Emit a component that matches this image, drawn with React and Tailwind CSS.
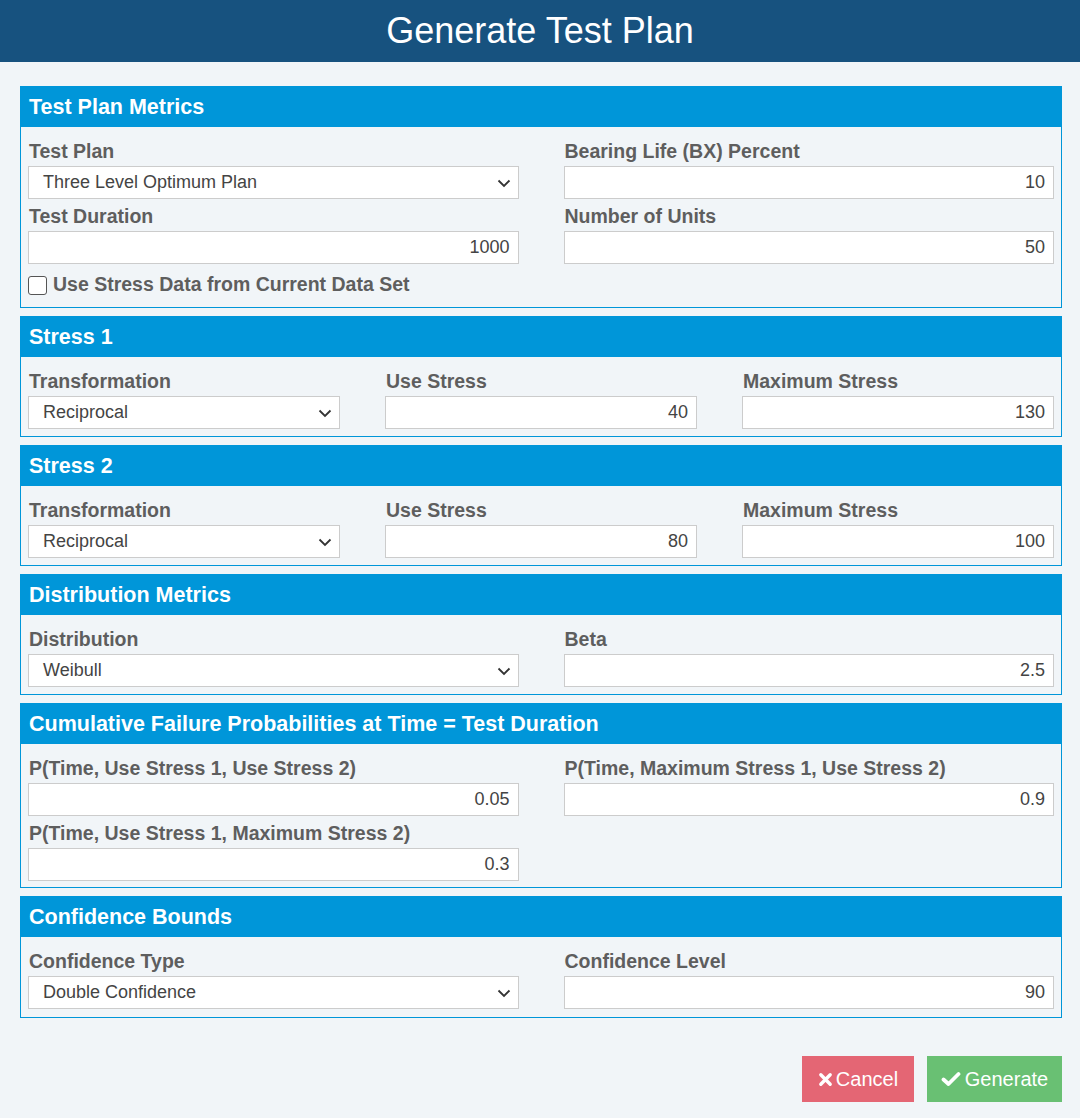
import React from "react";

const font = { fontFamily: '"Liberation Sans", Arial, sans-serif' };

function Chevron() {
  return (
    <svg width="14" height="9" viewBox="0 0 14 9" className="absolute right-[7px] top-[12px]">
      <path d="M1.5 1.5 L7 7 L12.5 1.5" fill="none" stroke="#333" strokeWidth="1.8" />
    </svg>
  );
}

function Label({ children }) {
  return <div className="h-6 leading-6 text-[19.5px] font-bold text-[#5e5e5e] pl-[1px] whitespace-nowrap">{children}</div>;
}

function Select({ value }) {
  return (
    <div className="relative mt-[3px] h-[33px] bg-white border border-[#cccccc] pl-[14px] leading-[31px] text-[18px] text-[#444]">
      {value}
      <Chevron />
    </div>
  );
}

function Input({ value }) {
  return (
    <div className="mt-[3px] h-[33px] bg-white border border-[#cccccc] pr-[8px] text-right leading-[31px] text-[18px] text-[#444]">
      {value}
    </div>
  );
}

function Field({ label, children, className = "" }) {
  return (
    <div className={className}>
      <Label>{label}</Label>
      {children}
    </div>
  );
}

function Panel({ title, children, pb = "pb-[7px]" }) {
  return (
    <div className="border border-[#0096d9] bg-[#f1f5f8]">
      <div className="h-[40px] bg-[#0096d9] text-white font-bold text-[21.5px] leading-[40px] pl-[8px] whitespace-nowrap">{title}</div>
      <div className={`px-[7px] pt-[12px] ${pb}`}>{children}</div>
    </div>
  );
}

function Stress({ title, use, max }) {
  return (
    <Panel title={title}>
      <div className="grid grid-cols-3 gap-x-[45px]">
        <Field label="Transformation"><Select value="Reciprocal" /></Field>
        <Field label="Use Stress"><Input value={use} /></Field>
        <Field label="Maximum Stress"><Input value={max} /></Field>
      </div>
    </Panel>
  );
}

export default function App() {
  return (
    <div style={font} className="w-[1080px] h-[1118px] bg-[#f1f5f8] overflow-hidden">
      <div className="h-[62px] bg-[#17527f] text-white text-[36px] leading-[62px] text-center">Generate Test Plan</div>
      <div className="pl-[20px] pr-[18px] pt-[24px] flex flex-col gap-[8px]">
        <Panel title="Test Plan Metrics" pb="pb-[9px]">
          <div className="grid grid-cols-2 gap-x-[45px] gap-y-[5px]">
            <Field label="Test Plan"><Select value="Three Level Optimum Plan" /></Field>
            <Field label="Bearing Life (BX) Percent"><Input value="10" /></Field>
            <Field label="Test Duration"><Input value="1000" /></Field>
            <Field label="Number of Units"><Input value="50" /></Field>
          </div>
          <div className="mt-[8px] h-[26px] flex items-center gap-[6px]">
            <div className="w-[19px] h-[19px] bg-white border border-[#555] rounded-[3px]" />
            <span className="text-[19.5px] font-bold text-[#5e5e5e]">Use Stress Data from Current Data Set</span>
          </div>
        </Panel>
        <Stress title="Stress 1" use="40" max="130" />
        <Stress title="Stress 2" use="80" max="100" />
        <Panel title="Distribution Metrics">
          <div className="grid grid-cols-2 gap-x-[45px]">
            <Field label="Distribution"><Select value="Weibull" /></Field>
            <Field label="Beta"><Input value="2.5" /></Field>
          </div>
        </Panel>
        <Panel title="Cumulative Failure Probabilities at Time = Test Duration" pb="pb-[6px]">
          <div className="grid grid-cols-2 gap-x-[45px] gap-y-[5px]">
            <Field label="P(Time, Use Stress 1, Use Stress 2)"><Input value="0.05" /></Field>
            <Field label="P(Time, Maximum Stress 1, Use Stress 2)"><Input value="0.9" /></Field>
            <Field label="P(Time, Use Stress 1, Maximum Stress 2)"><Input value="0.3" /></Field>
          </div>
        </Panel>
        <Panel title="Confidence Bounds" pb="pb-[8px]">
          <div className="grid grid-cols-2 gap-x-[45px]">
            <Field label="Confidence Type"><Select value="Double Confidence" /></Field>
            <Field label="Confidence Level"><Input value="90" /></Field>
          </div>
        </Panel>
      </div>
      <div className="pr-[18px] flex justify-end gap-[13px] mt-[38px]">
        <button className="h-[46px] w-[112px] bg-[#e46674] text-white text-[20px] flex items-center justify-center gap-[3px]">
          <svg width="15" height="15" viewBox="0 0 16 16"><path d="M3 3 L13 13 M13 3 L3 13" stroke="white" strokeWidth="3.6" strokeLinecap="round" /></svg>
          Cancel
        </button>
        <button className="h-[46px] w-[135px] bg-[#69c073] text-white text-[20px] flex items-center justify-center gap-[4px]">
          <svg width="20" height="16" viewBox="0 0 20 16"><path d="M2.5 8.5 L7.5 13 L17.5 3" fill="none" stroke="white" strokeWidth="3.8" strokeLinecap="round" strokeLinejoin="round" /></svg>
          Generate
        </button>
      </div>
    </div>
  );
}
